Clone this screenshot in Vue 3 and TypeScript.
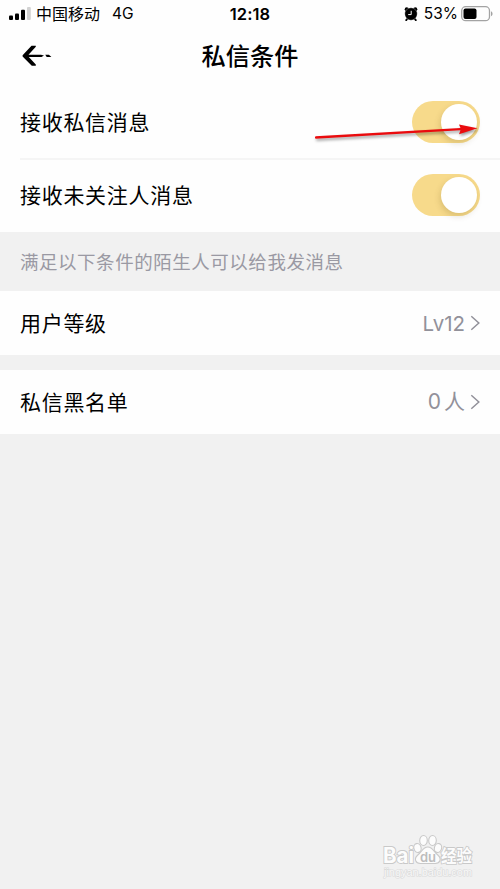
<script setup lang="ts">
interface Toggle {
  label: string
  on: boolean
}

const toggles: Toggle[] = [
  { label: '接收私信消息', on: true },
  { label: '接收未关注人消息', on: true },
]
</script>

<template>
  <div class="screen">
    <header class="status">
      <div class="carrier">
        <svg class="signal" width="22" height="14" viewBox="0 0 22 14">
          <rect x="0" y="8.6" width="4" height="4.4" rx="1" />
          <rect x="6" y="6.4" width="4" height="6.6" rx="1" />
          <rect x="12" y="2.8" width="4" height="10.2" rx="1" />
          <rect x="18" y="0" width="3.8" height="13" rx="1" fill="#d2d2d2" />
        </svg>
        <span class="operator">中国移动</span>
        <span class="network">4G</span>
      </div>
      <div class="clock">12:18</div>
      <div class="power">
        <svg class="alarm" width="14" height="14" viewBox="0 0 14 14">
          <path d="M3.2 12 2.2 13.2M10.800 12 11.800 13.200" stroke="#000" stroke-width="1.8" stroke-linecap="round" />
          <circle cx="2.700" cy="2.300" r="2" />
          <circle cx="11.300" cy="2.300" r="2" />
          <circle cx="7" cy="7" r="6.200" stroke="#fff" stroke-width=".3" />
          <path d="M7.200 3.800v3.800H4.200" fill="none" stroke="#fff" stroke-width="1" />
        </svg>
        <span class="percent">53%</span>
        <svg class="battery" width="32" height="16" viewBox="0 0 32 16">
          <rect x=".7" y=".7" width="27.8" height="14" rx="4" fill="none" stroke="#a3a3a3" stroke-width="1.3" />
          <rect x="2.500" y="2.500" width="13" height="10.400" rx="2" />
          <path d="M30 5.200c2 .7 2 4.300 0 5z" fill="#a3a3a3" />
        </svg>
      </div>
    </header>

    <nav class="nav">
      <svg class="back" width="32" height="24" viewBox="0 0 32 24">
        <path d="M10.500 1.800h4.300v1L7.500 10.800h12.500l3 .8-2.500 1.500H7.800l7 7.300v1.400h-4L1.600 12.600v-1.400z" />
        <path d="M24.300 10.700h3.600l2.500 2.300h-4.700z" />
      </svg>
      <h1 class="title">私信条件</h1>
    </nav>

    <section class="toggles">
      <div v-for="item in toggles" :key="item.label" class="row toggle-row">
        <span class="label">{{ item.label }}</span>
        <span class="switch" :class="{ on: item.on }"><span class="knob"></span></span>
      </div>
    </section>

    <p class="hint">满足以下条件的陌生人可以给我发消息</p>

    <div class="row level">
      <span class="label">用户等级</span>
      <span class="value">Lv12</span>
      <svg class="chevron" width="10" height="16" viewBox="0 0 10 16"><path d="m1.300 1.300 7.500 6.700-7.500 6.700" /></svg>
    </div>
    <div class="row blacklist">
      <span class="label">私信黑名单</span>
      <span class="value people"><span class="count">0</span>人</span>
      <svg class="chevron" width="10" height="16" viewBox="0 0 10 16"><path d="m1.300 1.300 7.500 6.700-7.500 6.700" /></svg>
    </div>

    <svg class="pointer" width="170" height="30" viewBox="0 0 170 30">
      <g class="pointer-shape">
        <path d="M4.500 16.300 149.500 8 148 4.500 166.500 8.300 148 14.200 149.500 10.200 4.500 18.700Q3.300 17.500 4.500 16.300z" />
      </g>
    </svg>

    <svg class="watermark" width="100" height="50" viewBox="0 0 100 50">
      <g class="mark">
        <text x="2" y="30" class="latin" textLength="31" lengthAdjust="spacingAndGlyphs">Bai</text>
        <ellipse cx="36.500" cy="15" rx="3.600" ry="4.500" transform="rotate(-15 36.500 15)" />
        <ellipse cx="42.500" cy="7.500" rx="3.800" ry="5" />
        <ellipse cx="51.500" cy="7.500" rx="3.800" ry="5" />
        <ellipse cx="57" cy="15" rx="3.600" ry="4.500" transform="rotate(15 57 15)" />
        <path d="M46.800 14c-5 0-6 5-9.500 7.500-5 4-3 9.500 3 9h13c6 .5 8-5 3-9C52.800 19 51.800 14 46.800 14z" />
        <text x="39" y="28.500" class="du">du</text>
        <text x="60" y="29" class="jingyan" textLength="31" lengthAdjust="spacingAndGlyphs">经验</text>
        <text x="3" y="43" class="site" textLength="88" lengthAdjust="spacingAndGlyphs">jingyan.baidu.com</text>
      </g>
    </svg>
  </div>
</template>

<style>
body {
  margin: 0;
}
</style>

<style scoped>
.screen {
  position: relative;
  box-sizing: border-box;
  width: 500px;
  height: 889px;
  overflow: hidden;
  background: #f1f1f1;
  color: #000;
  font-family: Inter, 'Noto Sans CJK SC', sans-serif;
}
.status {
  display: grid;
  grid-template-columns: 1fr auto 1fr;
  align-items: center;
  height: 28px;
  padding: 0 7px 0 9px;
  background: #fefefe;
  line-height: 28px;
}
.carrier,
.power {
  display: flex;
  align-items: center;
}
.signal,
.alarm,
.battery {
  margin-bottom: 1px;
}
.operator {
  margin-left: 5px;
  font-size: 16px;
}
.network {
  margin-left: 12px;
  font-size: 15.5px;
}
.clock {
  margin-right: 2px;
  font-size: 16.5px;
  font-weight: 600;
  letter-spacing: 0.1px;
}
.power {
  justify-content: flex-end;
}
.percent {
  margin: 0 3px 0 6px;
  font-size: 15.5px;
}
.nav {
  display: grid;
  grid-template-columns: 60px 1fr 60px;
  align-items: center;
  height: 56px;
  background: #fefefe;
}
.back {
  margin-left: 21px;
}
.title {
  margin: 0;
  padding-top: 1px;
  font-size: 24.2px;
  font-weight: 500;
  line-height: 55px;
  text-align: center;
}
.toggles {
  height: 148px;
  background: #fefefe;
}
.row {
  display: flex;
  align-items: center;
  box-sizing: border-box;
  padding: 0 20px;
  background: #fefefe;
}
.toggle-row {
  height: 74px;
  padding-top: 2px;
}
.toggle-row + .toggle-row {
  height: 74px;
  margin-left: 20px;
  padding: 0 20px 2px 0;
  border-top: 2px solid #f5f5f5;
}
.label {
  flex: 1;
  padding-top: 2px;
  font-size: 21px;
  letter-spacing: 0.7px;
  line-height: 32px;
}
.switch {
  display: flex;
  box-sizing: border-box;
  width: 68px;
  height: 42px;
  padding: 3px;
  border-radius: 21px;
  background: #ddd;
}
.switch.on {
  justify-content: flex-end;
  background: #f7da8b;
}
.knob {
  width: 36px;
  height: 36px;
  border-radius: 50%;
  background: #fff;
  box-shadow: -1px 3px 6px rgba(90, 65, 0, 0.18);
}
.hint {
  box-sizing: border-box;
  height: 59px;
  margin: 0;
  padding-left: 20px;
  color: #9a99a3;
  font-size: 18.5px;
  letter-spacing: 0.53px;
  line-height: 60px;
}
.level {
  height: 64px;
}
.blacklist {
  height: 64px;
  margin-top: 15px;
}
.value {
  margin-right: 5px;
  color: #92919a;
  font-size: 20.5px;
}
.people {
  margin-top: -4px;
  font-size: 21px;
}
.count {
  margin-right: 3px;
}
.chevron path {
  fill: none;
  stroke: #92919a;
  stroke-width: 1.5;
}
.pointer {
  position: absolute;
  top: 120px;
  left: 311px;
  overflow: visible;
}
.pointer-shape {
  fill: #ea0b0e;
  filter: drop-shadow(1px 2.5px 1.5px rgba(0, 0, 0, 0.4));
}
.watermark {
  position: absolute;
  top: 833px;
  left: 381px;
}
.mark {
  fill: #fcfcfc;
  stroke: #c9c9c9;
  stroke-width: 1.1;
}
.mark text {
  paint-order: stroke;
  stroke-width: 1.8;
}
.latin {
  font: 700 21px Inter, sans-serif;
}
.mark .du {
  fill: #bdbdbd;
  stroke: none;
  font: 600 13px Inter, sans-serif;
}
.jingyan {
  font: 700 17px 'Noto Sans CJK SC', sans-serif;
}
.mark .site {
  fill: #f8f8f8;
  stroke: #dadada;
  stroke-width: 1.2;
  font: 400 11px 'Liberation Sans', sans-serif;
}
</style>
